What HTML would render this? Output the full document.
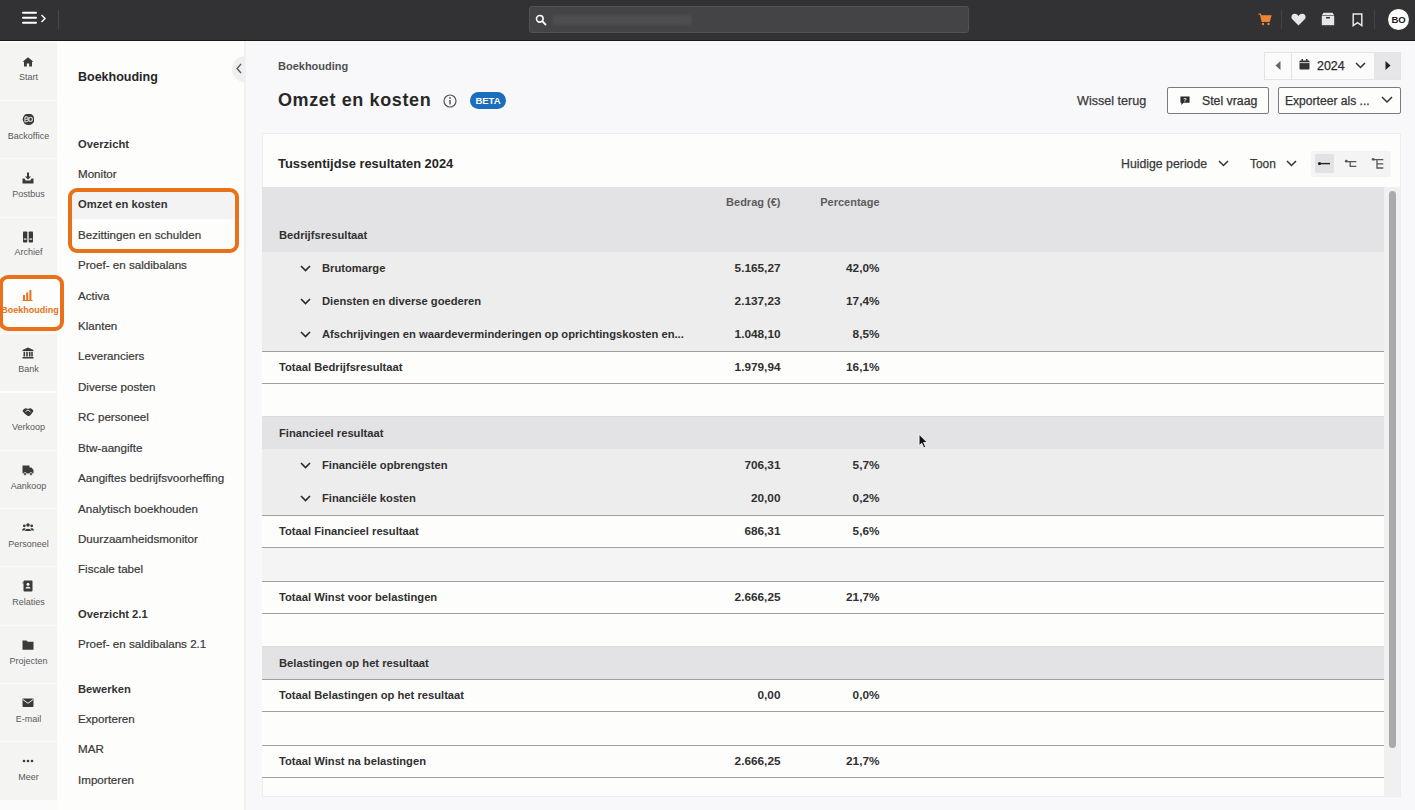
<!DOCTYPE html>
<html><head><meta charset="utf-8">
<style>
*{box-sizing:border-box;margin:0;padding:0}
html,body{width:1415px;height:810px;overflow:hidden;background:#f8f8fa;font-family:"Liberation Sans",sans-serif;color:#1f1f1f;position:relative}
#top{position:absolute;left:0;top:0;width:1415px;height:41px;background:#323234;border-bottom:1px solid #1a1a1a}
#icons{position:absolute;left:0;top:41px;width:57px;height:769px;background:#fbfbfb}
.ic{position:absolute;left:0;width:57px;height:57.3px;background:#f4f4f3}
.ic .isv{position:absolute}
.ic .lb{position:absolute;left:0;right:0;top:28.8px;text-align:center;font-size:9px;line-height:12px;color:#5a5a5a;white-space:nowrap}
#side{position:absolute;left:57px;top:41px;width:189px;height:769px;background:#fdfdfc;border-right:2px solid #f1f1f2}
.si,.sh{position:absolute;left:78px;font-size:11.6px;line-height:16px;color:#333;white-space:nowrap}
.si{-webkit-text-stroke:0.2px #383838;color:#383838}
.sh{font-weight:bold;font-size:11.2px}
#card{position:absolute;left:262px;top:133px;width:1139px;height:664px;background:#fdfdfc;border:1px solid #ededef}
.tr{position:absolute;left:262px;width:1122px}
.t,.n,.th{position:absolute;font-size:11.2px;line-height:16px;font-weight:bold;color:#303030;white-space:nowrap}
.n{font-size:11.8px}
.th{font-weight:bold;font-size:11px;color:#5c5c5c}
.btn{position:absolute;border:1px solid #7a7a7a;border-radius:2px;background:#fdfdfc;font-size:12.3px;line-height:16px;color:#333;white-space:nowrap}
</style></head><body>
<div id="top">
  <svg style="position:absolute;left:22px;top:11px" width="26" height="14" viewBox="0 0 26 14"><path d="M1 1.7 H14 M1 6.8 H14 M1 11.8 H14" stroke="#fff" stroke-width="2" stroke-linecap="round"/><path d="M19.5 4 L23 7.5 L19.5 11" stroke="#fff" stroke-width="1.4" fill="none"/></svg>
  <div style="position:absolute;left:58px;top:10px;width:1px;height:19px;background:#464646"></div>
  <div style="position:absolute;left:529px;top:6px;width:440px;height:27px;background:#444446;border:1px solid #525254;border-radius:3px"></div>
  <svg style="position:absolute;left:535px;top:13.5px" width="12" height="12" viewBox="0 0 12 12"><circle cx="4.8" cy="4.8" r="3.3" stroke="#fff" stroke-width="1.6" fill="none"/><path d="M7.2 7.2 L10.5 10.5" stroke="#fff" stroke-width="1.8" stroke-linecap="round"/></svg>
  <div style="position:absolute;left:552px;top:14.5px;width:140px;height:10px;background:#4e4e50;border-radius:4px;filter:blur(1px)"></div>
  <svg style="position:absolute;left:1258px;top:13px" width="14" height="13" viewBox="0 0 14 13"><path d="M0.5 0.8 L2.5 1.2 L4.2 8.3 H11.2 L12.8 3 H3.3" stroke="#ee8533" stroke-width="1.3" fill="none"/><path d="M3.5 3 H12.8 L11.2 8.3 H4.2z" fill="#ee8533"/><circle cx="5" cy="11" r="1.2" fill="#ee8533"/><circle cx="10.5" cy="11" r="1.2" fill="#ee8533"/></svg>
  <div style="position:absolute;left:1281px;top:10px;width:1px;height:19px;background:#444"></div>
  <svg style="position:absolute;left:1291px;top:13px" width="15" height="13" viewBox="0 0 15 13"><path d="M7.5 12.5 L1.3 6.3 C-0.5 4.3 0.5 0.8 3.8 0.8 C5.6 0.8 6.8 2 7.5 3 C8.2 2 9.4 0.8 11.2 0.8 C14.5 0.8 15.5 4.3 13.7 6.3 Z" fill="#e6e6e6"/></svg>
  <svg style="position:absolute;left:1321px;top:12px" width="14" height="14" viewBox="0 0 14 14"><path d="M2.5 0.8 H11.5 L13 3 H1z" fill="#e6e6e6"/><rect x="0.8" y="3.6" width="12.4" height="9.6" fill="#e6e6e6"/><rect x="5" y="5" width="4" height="1.5" fill="#323234"/></svg>
  <svg style="position:absolute;left:1352px;top:13px" width="11" height="14" viewBox="0 0 11 14"><path d="M1.2 1 H9.8 V12.6 L5.5 9.6 L1.2 12.6Z" stroke="#e6e6e6" stroke-width="1.5" fill="none"/></svg>
  <div style="position:absolute;left:1374px;top:10px;width:1px;height:19px;background:#444"></div>
  <div style="position:absolute;left:1388px;top:9px;width:21px;height:21px;border-radius:50%;background:#fdfdfd;color:#1a1a1a;font-size:9.5px;font-weight:bold;line-height:21px;text-align:center;letter-spacing:-0.2px">BO</div>
</div>
<div id="icons">
<div class="ic" style="top:1.6px"><svg class="isv" width="12" height="12" viewBox="0 0 12 12" style="left:22px;top:13px"><path d="M6 1.2 L0.6 5.8 H2 V10.5 H4.8 V7.6 H7.2 V10.5 H10 V5.8 H11.4 Z" fill="#3a3a3a"/></svg><div class="lb" style="color:#5a5a5a;font-weight:normal">Start</div></div>
<div class="ic" style="top:59.92px"><svg class="isv" width="12" height="12" viewBox="0 0 12 12" style="left:22px;top:13px"><circle cx="6.5" cy="5.3" r="5.8" fill="#3a3a3a"/><path d="M2.9 2.9 H5 C6.6 2.9 6.6 5.2 5 5.2 H2.9 M5 5.2 C6.8 5.2 6.8 7.7 5 7.7 H2.9 V2.9" stroke="#d8d8d8" stroke-width="1.1" fill="none"/><ellipse cx="8.6" cy="5.3" rx="1.8" ry="2.1" stroke="#d8d8d8" stroke-width="1.1" fill="none"/></svg><div class="lb" style="color:#5a5a5a;font-weight:normal">Backoffice</div></div>
<div class="ic" style="top:118.24px"><svg class="isv" width="12" height="12" viewBox="0 0 12 12" style="left:22px;top:13px"><path d="M5 0.5 h2 v4 h2 l-3 3 l-3 -3 h2z M0.5 6.5 l2 0 l1.2 2 h4.6 l1.2 -2 h2 v5 h-11z" fill="#3a3a3a"/></svg><div class="lb" style="color:#5a5a5a;font-weight:normal">Postbus</div></div>
<div class="ic" style="top:176.56px"><svg class="isv" width="12" height="12" viewBox="0 0 12 12" style="left:22px;top:13px"><rect x="1" y="0.5" width="4.3" height="11" rx="0.8" fill="#3a3a3a"/><rect x="6.7" y="0.5" width="4.3" height="11" rx="0.8" fill="#3a3a3a"/><rect x="1.8" y="7.5" width="2.7" height="1.2" fill="#f4f4f3"/><rect x="7.5" y="7.5" width="2.7" height="1.2" fill="#f4f4f3"/></svg><div class="lb" style="color:#5a5a5a;font-weight:normal">Archief</div></div>
<div class="ic" style="top:234.88px"></div>
<div class="ic" style="top:293.2px"><svg class="isv" width="12" height="12" viewBox="0 0 12 12" style="left:22px;top:13px"><path d="M6 0.5 L0.5 3 V4 H11.5 V3 Z M1.5 4.8 h1.6 v4.7 h-1.6z M4.2 4.8 h1.6 v4.7 h-1.6z M6.9 4.8 h1.6 v4.7 h-1.6z M9.2 4.8 h1.6 v4.7 h-1.6z M0.5 10 h11 v1.5 h-11z" fill="#3a3a3a"/></svg><div class="lb" style="color:#5a5a5a;font-weight:normal">Bank</div></div>
<div class="ic" style="top:351.52px"><svg class="isv" width="12" height="12" viewBox="0 0 12 12" style="left:22px;top:13px"><path d="M0.5 5 C2 2 4 1.5 6 3 C8 1.5 10 2 11.5 5 L9 8.5 C7.5 10 6.5 10.5 5.5 9.8 L2.5 7.5 Z" fill="#3a3a3a"/><path d="M3.5 5.5 L6 4 L8.5 6" stroke="#f4f4f3" stroke-width="0.9" fill="none"/></svg><div class="lb" style="color:#5a5a5a;font-weight:normal">Verkoop</div></div>
<div class="ic" style="top:409.84px"><svg class="isv" width="12" height="12" viewBox="0 0 12 12" style="left:22px;top:13px"><path d="M0.5 1.5 h7 v2 h2 l2 2.5 v3.5 h-11z" fill="#3a3a3a"/><circle cx="3" cy="10" r="1.5" fill="#3a3a3a" stroke="#f4f4f3" stroke-width="0.7"/><circle cx="9" cy="10" r="1.5" fill="#3a3a3a" stroke="#f4f4f3" stroke-width="0.7"/></svg><div class="lb" style="color:#5a5a5a;font-weight:normal">Aankoop</div></div>
<div class="ic" style="top:468.16px"><svg class="isv" width="12" height="12" viewBox="0 0 12 12" style="left:22px;top:13px"><circle cx="6" cy="3" r="1.8" fill="#3a3a3a"/><circle cx="2.3" cy="3.8" r="1.4" fill="#3a3a3a"/><circle cx="9.7" cy="3.8" r="1.4" fill="#3a3a3a"/><path d="M3 9 C3 6 9 6 9 9z M0 8.5 C0 6 3 6 3.5 6.5 L2.5 8.5z M12 8.5 C12 6 9 6 8.5 6.5 L9.5 8.5z" fill="#3a3a3a"/></svg><div class="lb" style="color:#5a5a5a;font-weight:normal">Personeel</div></div>
<div class="ic" style="top:526.48px"><svg class="isv" width="12" height="12" viewBox="0 0 12 12" style="left:22px;top:13px"><rect x="1.5" y="0.5" width="9" height="11" rx="1" fill="#3a3a3a"/><circle cx="6" cy="4.3" r="1.5" fill="#f4f4f3"/><path d="M3.5 8.5 C3.5 6.3 8.5 6.3 8.5 8.5z" fill="#f4f4f3"/><rect x="0.3" y="2.5" width="1.5" height="0.9" fill="#3a3a3a"/></svg><div class="lb" style="color:#5a5a5a;font-weight:normal">Relaties</div></div>
<div class="ic" style="top:584.8px"><svg class="isv" width="12" height="12" viewBox="0 0 12 12" style="left:22px;top:13px"><path d="M0.5 1.5 h4 l1.2 1.3 h5.8 v8 h-11z" fill="#3a3a3a"/></svg><div class="lb" style="color:#5a5a5a;font-weight:normal">Projecten</div></div>
<div class="ic" style="top:643.12px"><svg class="isv" width="12" height="12" viewBox="0 0 12 12" style="left:22px;top:13px"><rect x="0.5" y="1.5" width="11" height="8.5" rx="1" fill="#3a3a3a"/><path d="M0.8 2.5 L6 6.3 L11.2 2.5" stroke="#f4f4f3" stroke-width="1" fill="none"/></svg><div class="lb" style="color:#5a5a5a;font-weight:normal">E-mail</div></div>
<div class="ic" style="top:701.44px"><svg class="isv" width="12" height="12" viewBox="0 0 12 12" style="left:22px;top:13px"><circle cx="2" cy="6" r="1.3" fill="#3a3a3a"/><circle cx="6" cy="6" r="1.3" fill="#3a3a3a"/><circle cx="10" cy="6" r="1.3" fill="#3a3a3a"/></svg><div class="lb" style="color:#5a5a5a;font-weight:normal">Meer</div></div>
</div>
<div id="side">
  <div style="position:absolute;left:175px;top:15px;width:13px;height:25.5px;border-radius:13px 0 0 13px;background:#efeff0"></div>
  <svg style="position:absolute;left:178px;top:22px" width="8" height="11" viewBox="0 0 8 11"><path d="M6 1 L2 5.5 L6 10" stroke="#555" stroke-width="1.3" fill="none"/></svg>
</div>
<div style="position:absolute;left:-1px;top:275px;width:65px;height:56px;border:4.6px solid #e8711a;border-radius:9px;background:#fdfdfc"></div>
<div style="position:absolute;left:22px;top:286.5px;"><svg width="12" height="12" viewBox="0 0 12 12"><rect x="1" y="6" width="2" height="5" fill="#e8711a"/><rect x="4.2" y="3.5" width="2" height="7.5" fill="#e8711a"/><rect x="7.4" y="1" width="2" height="10" fill="#e8711a"/><rect x="0.5" y="11" width="10" height="1" fill="#e8711a"/></svg></div>
<div style="position:absolute;left:0;width:60px;top:304px;text-align:center;font-size:9px;line-height:12px;color:#e8711a;font-weight:bold">Boekhouding</div>
<div style="position:absolute;left:78px;top:69px;font-size:12.5px;line-height:16px;font-weight:bold;color:#262626">Boekhouding</div>
<div style="position:absolute;left:72px;top:192px;width:162px;height:27px;background:#f3f3f3"></div>
<div class="sh" style="top:136.3px">Overzicht</div>
<div class="si" style="top:165.9px">Monitor</div>
<div class="sh" style="top:196.1px">Omzet en kosten</div>
<div class="si" style="top:226.6px">Bezittingen en schulden</div>
<div class="si" style="top:256.9px">Proef- en saldibalans</div>
<div class="si" style="top:287.6px">Activa</div>
<div class="si" style="top:317.9px">Klanten</div>
<div class="si" style="top:348.4px">Leveranciers</div>
<div class="si" style="top:378.8px">Diverse posten</div>
<div class="si" style="top:409.1px">RC personeel</div>
<div class="si" style="top:439.6px">Btw-aangifte</div>
<div class="si" style="top:470.1px">Aangiftes bedrijfsvoorheffing</div>
<div class="si" style="top:500.6px">Analytisch boekhouden</div>
<div class="si" style="top:530.9px">Duurzaamheidsmonitor</div>
<div class="si" style="top:561.3px">Fiscale tabel</div>
<div class="sh" style="top:606.0px">Overzicht 2.1</div>
<div class="si" style="top:636.0px">Proef- en saldibalans 2.1</div>
<div class="sh" style="top:680.8px">Bewerken</div>
<div class="si" style="top:710.9px">Exporteren</div>
<div class="si" style="top:741.1px">MAR</div>
<div class="si" style="top:771.6px">Importeren</div>
<div style="position:absolute;left:68px;top:188px;width:171px;height:65px;border:4px solid #e8711a;border-radius:9px"></div>

<div style="position:absolute;left:278px;top:57.7px;font-size:11px;line-height:16px;font-weight:bold;color:#505050">Boekhouding</div>
<div style="position:absolute;left:278px;top:88.3px;font-size:18px;letter-spacing:0.62px;line-height:24px;font-weight:bold;color:#282828">Omzet en kosten</div>
<svg style="position:absolute;left:443px;top:94px" width="14" height="14" viewBox="0 0 14 14"><circle cx="7" cy="7" r="6" stroke="#555" stroke-width="1.2" fill="none"/><rect x="6.3" y="6" width="1.4" height="4.5" fill="#555"/><circle cx="7" cy="4" r="0.9" fill="#555"/></svg>
<div style="position:absolute;left:470px;top:92px;width:36px;height:17px;border-radius:8.5px;background:#1b6dbd;color:#fff;font-size:9.5px;line-height:17px;font-weight:bold;text-align:center">BETA</div>

<div style="position:absolute;left:1264px;top:52px;width:137px;height:28px;border:1px solid #e4e4e6;background:#fbfbfb"></div>
<div style="position:absolute;left:1291px;top:52px;width:1px;height:28px;background:#e4e4e6"></div>
<div style="position:absolute;left:1374px;top:53px;width:26px;height:26px;background:#e6e6e8"></div>
<svg style="position:absolute;left:1274px;top:60px" width="8" height="11" viewBox="0 0 8 11"><path d="M6.5 1 L1.5 5.5 L6.5 10z" fill="#666"/></svg>
<svg style="position:absolute;left:1384px;top:60px" width="8" height="11" viewBox="0 0 8 11"><path d="M1.5 1 L6.5 5.5 L1.5 10z" fill="#222"/></svg>
<svg style="position:absolute;left:1299px;top:59px" width="11" height="11" viewBox="0 0 11 11"><rect x="0.5" y="1.5" width="10" height="9" rx="1" fill="#333"/><rect x="2.5" y="0" width="1.5" height="2.5" fill="#333"/><rect x="7" y="0" width="1.5" height="2.5" fill="#333"/><rect x="0.5" y="3.3" width="10" height="0.8" fill="#fbfbfb"/></svg>
<div style="position:absolute;left:1317px;top:58px;font-size:12.4px;line-height:16px;color:#2a2a2a;-webkit-text-stroke:0.25px #2a2a2a">2024</div>
<svg style="position:absolute;left:1355px;top:62px" width="11" height="7" viewBox="0 0 11 7"><path d="M1 1 L5.5 5.5 L10 1" stroke="#333" stroke-width="1.5" fill="none"/></svg>

<div style="position:absolute;left:1077px;top:93.1px;font-size:12.6px;line-height:16px;color:#3a3a3a;-webkit-text-stroke:0.25px #3a3a3a">Wissel terug</div>
<div class="btn" style="left:1167px;top:87px;width:102px;height:27px"></div>
<svg style="position:absolute;left:1180px;top:95.5px" width="10" height="10" viewBox="0 0 11 11"><path d="M0.5 0.5 H10.5 V7.5 H4 L1.5 10 V7.5 H0.5z" fill="#2a2a2a"/><text x="5.5" y="6.3" font-size="6" font-weight="bold" text-anchor="middle" fill="#fff" font-family="Liberation Sans">?</text></svg>
<div style="position:absolute;left:1202px;top:92.8px;font-size:12.3px;line-height:16px;color:#333;-webkit-text-stroke:0.25px #333">Stel vraag</div>
<div class="btn" style="left:1278px;top:87px;width:123px;height:27px"></div>
<div style="position:absolute;left:1285px;top:92.6px;font-size:12.1px;line-height:16px;color:#333;-webkit-text-stroke:0.25px #333">Exporteer als ...</div>
<svg style="position:absolute;left:1381px;top:96px" width="12" height="8" viewBox="0 0 12 8"><path d="M1 1 L6 6 L11 1" stroke="#333" stroke-width="1.5" fill="none"/></svg>

<div id="card"></div>
<div style="position:absolute;left:278px;top:155.7px;font-size:12.9px;line-height:16px;font-weight:bold;color:#262626">Tussentijdse resultaten 2024</div>
<div style="position:absolute;left:1121px;top:155.8px;font-size:12.3px;line-height:16px;color:#3a3a3a;-webkit-text-stroke:0.25px #3a3a3a">Huidige periode</div>
<svg style="position:absolute;left:1218px;top:159.7px" width="11" height="7" viewBox="0 0 11 7"><path d="M1 1 L5.5 5.5 L10 1" stroke="#333" stroke-width="1.5" fill="none"/></svg>
<div style="position:absolute;left:1250px;top:155.8px;font-size:11.9px;line-height:16px;color:#3a3a3a;-webkit-text-stroke:0.25px #3a3a3a">Toon</div>
<svg style="position:absolute;left:1286px;top:159.7px" width="11" height="7" viewBox="0 0 11 7"><path d="M1 1 L5.5 5.5 L10 1" stroke="#333" stroke-width="1.5" fill="none"/></svg>
<div style="position:absolute;left:1311px;top:150.5px;width:80px;height:26.5px;background:#f4f4f4;border-radius:2px"></div>
<div style="position:absolute;left:1314.5px;top:154px;width:19.5px;height:19px;background:#e2e2e4;border-radius:1px"></div>
<svg style="position:absolute;left:1317px;top:160px" width="14" height="8" viewBox="0 0 14 8"><circle cx="2.5" cy="3.6" r="1.6" fill="#222"/><path d="M3 3.6 H13" stroke="#222" stroke-width="1.4"/></svg>
<svg style="position:absolute;left:1344px;top:158px" width="14" height="11" viewBox="0 0 14 11"><circle cx="2.3" cy="3.2" r="1.4" fill="#555"/><path d="M3 3.6 H12.3 M6.2 3.6 V8.3 H12.3" stroke="#555" stroke-width="1.3" fill="none"/></svg>
<svg style="position:absolute;left:1371px;top:156px" width="14" height="13" viewBox="0 0 14 13"><circle cx="2.2" cy="3.3" r="1.4" fill="#555"/><path d="M3 3.7 H12.3 M6 3.7 V12 H12.3 M6 7.9 H12.3" stroke="#555" stroke-width="1.3" fill="none"/></svg>

<div class="tr" style="top:187px;height:65px;background:#e3e3e5"><div class="th" style="right:603.5px;top:7px">Bedrag (€)</div><div class="th" style="right:504.5px;top:7px">Percentage</div><div class="t" style="left:17px;top:40px">Bedrijfsresultaat</div></div>
<div class="tr" style="top:252px;height:33px;background:#ededed"><svg width="11" height="7" viewBox="0 0 11 7" style="position:absolute;left:37.5px;top:13px"><path d="M1 1 L5.5 5.5 L10 1" stroke="#2a2a2a" stroke-width="1.6" fill="none"/></svg><div class="t" style="left:60px;top:8px">Brutomarge</div><div class="n" style="right:603.5px;top:8px">5.165,27</div><div class="n" style="right:504.5px;top:8px">42,0%</div></div>
<div class="tr" style="top:285px;height:33px;background:#ededed"><svg width="11" height="7" viewBox="0 0 11 7" style="position:absolute;left:37.5px;top:13px"><path d="M1 1 L5.5 5.5 L10 1" stroke="#2a2a2a" stroke-width="1.6" fill="none"/></svg><div class="t" style="left:60px;top:8px">Diensten en diverse goederen</div><div class="n" style="right:603.5px;top:8px">2.137,23</div><div class="n" style="right:504.5px;top:8px">17,4%</div></div>
<div class="tr" style="top:318px;height:33px;background:#ededed"><svg width="11" height="7" viewBox="0 0 11 7" style="position:absolute;left:37.5px;top:13px"><path d="M1 1 L5.5 5.5 L10 1" stroke="#2a2a2a" stroke-width="1.6" fill="none"/></svg><div class="t" style="left:60px;top:8px">Afschrijvingen en waardeverminderingen op oprichtingskosten en...</div><div class="n" style="right:603.5px;top:8px">1.048,10</div><div class="n" style="right:504.5px;top:8px">8,5%</div></div>
<div class="tr" style="top:351px;height:33px;background:#fdfdfc;border-top:1px solid #a0a0a0;border-bottom:1px solid #a0a0a0"><div class="t" style="left:17px;top:7px">Totaal Bedrijfsresultaat</div><div class="n" style="right:603.5px;top:7px">1.979,94</div><div class="n" style="right:504.5px;top:7px">16,1%</div></div>
<div class="tr" style="top:384px;height:32px;background:#fdfdfc"></div>
<div class="tr" style="top:416px;height:33px;background:#e3e3e5;border-top:1px solid #dcdcdc"><div class="t" style="left:17px;top:8px">Financieel resultaat</div></div>
<div class="tr" style="top:449px;height:33px;background:#ededed"><svg width="11" height="7" viewBox="0 0 11 7" style="position:absolute;left:37.5px;top:13px"><path d="M1 1 L5.5 5.5 L10 1" stroke="#2a2a2a" stroke-width="1.6" fill="none"/></svg><div class="t" style="left:60px;top:8px">Financiële opbrengsten</div><div class="n" style="right:603.5px;top:8px">706,31</div><div class="n" style="right:504.5px;top:8px">5,7%</div></div>
<div class="tr" style="top:482px;height:33px;background:#ededed"><svg width="11" height="7" viewBox="0 0 11 7" style="position:absolute;left:37.5px;top:13px"><path d="M1 1 L5.5 5.5 L10 1" stroke="#2a2a2a" stroke-width="1.6" fill="none"/></svg><div class="t" style="left:60px;top:8px">Financiële kosten</div><div class="n" style="right:603.5px;top:8px">20,00</div><div class="n" style="right:504.5px;top:8px">0,2%</div></div>
<div class="tr" style="top:515px;height:33px;background:#fdfdfc;border-top:1px solid #a0a0a0;border-bottom:1px solid #a0a0a0"><div class="t" style="left:17px;top:7px">Totaal Financieel resultaat</div><div class="n" style="right:603.5px;top:7px">686,31</div><div class="n" style="right:504.5px;top:7px">5,6%</div></div>
<div class="tr" style="top:548px;height:33px;background:#f4f4f4"></div>
<div class="tr" style="top:581px;height:33px;background:#fdfdfc;border-top:1px solid #a0a0a0;border-bottom:1px solid #a0a0a0"><div class="t" style="left:17px;top:7px">Totaal Winst voor belastingen</div><div class="n" style="right:603.5px;top:7px">2.666,25</div><div class="n" style="right:504.5px;top:7px">21,7%</div></div>
<div class="tr" style="top:614px;height:32px;background:#fdfdfc"></div>
<div class="tr" style="top:646px;height:33px;background:#e3e3e5;border-top:1px solid #dcdcdc"><div class="t" style="left:17px;top:8px">Belastingen op het resultaat</div></div>
<div class="tr" style="top:679px;height:33px;background:#fdfdfc;border-top:1px solid #a0a0a0;border-bottom:1px solid #a0a0a0"><div class="t" style="left:17px;top:7px">Totaal Belastingen op het resultaat</div><div class="n" style="right:603.5px;top:7px">0,00</div><div class="n" style="right:504.5px;top:7px">0,0%</div></div>
<div class="tr" style="top:712px;height:33px;background:#fdfdfc"></div>
<div class="tr" style="top:745px;height:33px;background:#fdfdfc;border-top:1px solid #a0a0a0;border-bottom:1px solid #a0a0a0"><div class="t" style="left:17px;top:7px">Totaal Winst na belastingen</div><div class="n" style="right:603.5px;top:7px">2.666,25</div><div class="n" style="right:504.5px;top:7px">21,7%</div></div>
<div style="position:absolute;left:1384px;top:187px;width:16px;height:609px;background:#f0f0f0"></div>
<div style="position:absolute;left:1389px;top:191px;width:7px;height:557px;border-radius:4px;background:#aaaaaa"></div>
<svg style="position:absolute;left:917.7px;top:433px" width="11" height="16" viewBox="0 0 10 14"><path d="M1 1 V11.2 L3.4 9 L5.3 13.2 L7 12.4 L5.1 8.3 H8.4Z" fill="#111" stroke="#fff" stroke-width="0.7"/></svg>
</body></html>
